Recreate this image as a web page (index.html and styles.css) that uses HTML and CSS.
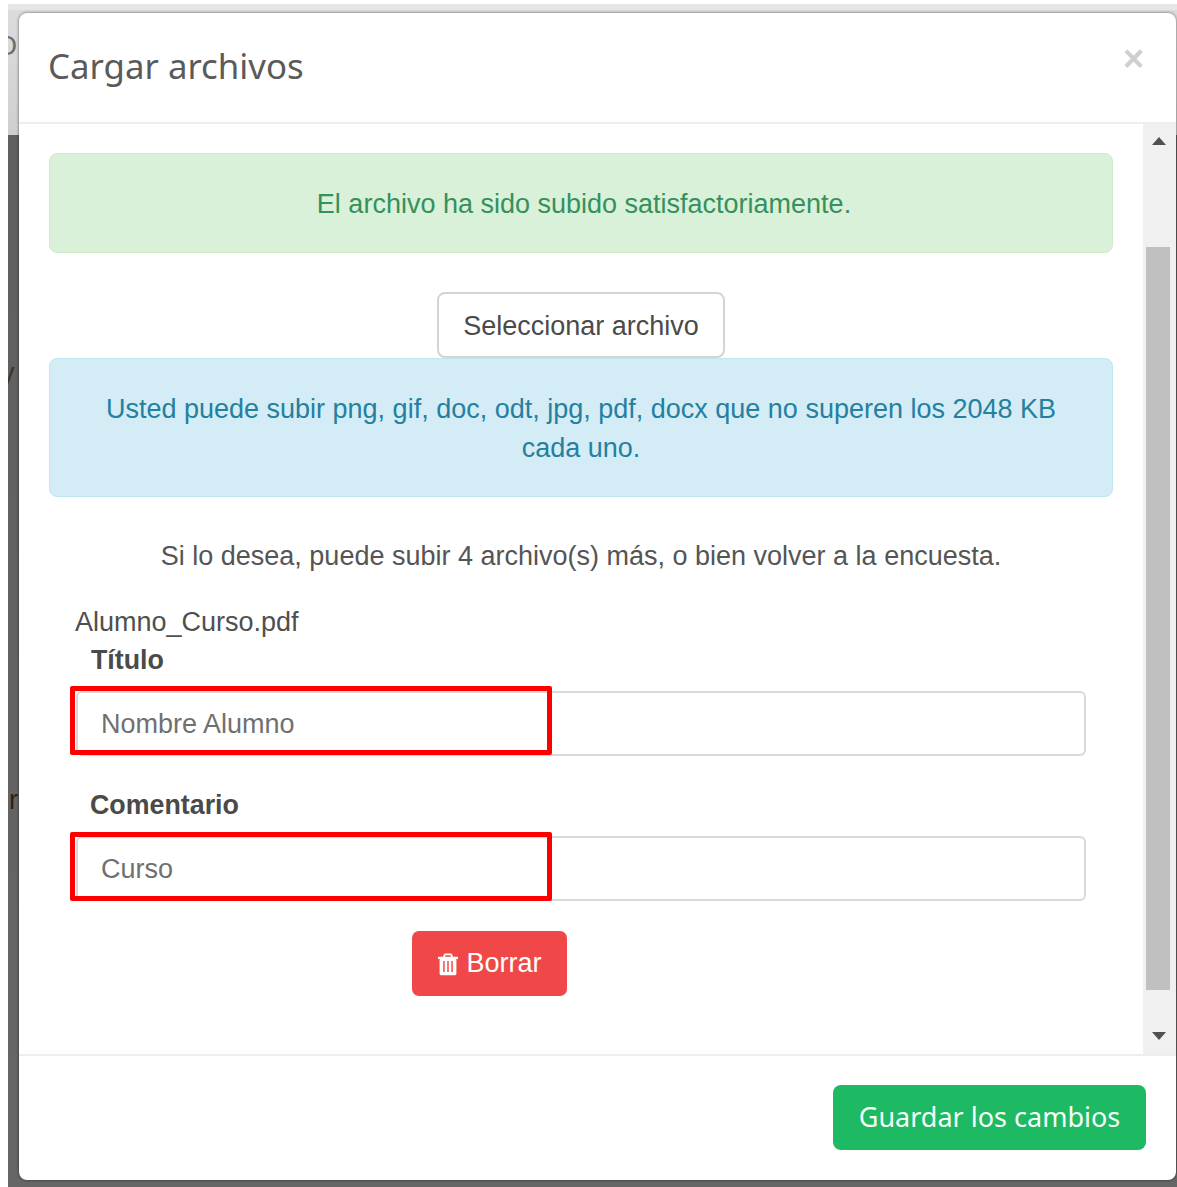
FILE: index.html
```html
<!DOCTYPE html>
<html lang="es">
<head>
<meta charset="utf-8">
<title>Cargar archivos</title>
<link rel="stylesheet" href="styles.css">
</head>
<body>
<div class="backdrop">
  <span class="behind behind-a">O,</span>
  <span class="behind behind-b">y</span>
  <span class="behind behind-c">.</span>
  <span class="behind behind-d">r</span>
  <div class="modal">
    <header class="modal-header">
      <h4 class="modal-title">Cargar archivos</h4>
      <span class="close">×</span>
    </header>
    <div class="modal-middle">
      <main class="modal-body">
        <div class="alert alert-success">El archivo ha sido subido satisfactoriamente.</div>
        <div class="picker"><button class="btn-file" type="button">Seleccionar archivo</button></div>
        <div class="alert alert-info">Usted puede subir png, gif, doc, odt, jpg, pdf, docx que no superen los 2048 KB cada uno.</div>
        <p class="hint">Si lo desea, puede subir 4 archivo(s) más, o bien volver a la encuesta.</p>
        <div class="file-name">Alumno_Curso.pdf</div>
        <div class="field field-title">
          <label class="field-label">Título</label>
          <div class="control">
            <input class="input" type="text" value="Nombre Alumno">
            <span class="mark"></span>
          </div>
        </div>
        <div class="field field-comment">
          <label class="field-label">Comentario</label>
          <div class="control">
            <input class="input" type="text" value="Curso">
            <span class="mark"></span>
          </div>
        </div>
        <div class="actions">
          <button class="btn-delete" type="button">
            <svg class="trash" viewBox="0 0 20 24" width="22" height="24" aria-hidden="true">
              <path fill="#fff" fill-rule="evenodd" d="M6.5 1.5h7l1.6 3.2H20v2.2h-1.600v14.600c0 1-.8 1.800-1.800 1.800H3.400c-1 0-1.800-.8-1.800-1.800V6.900H0V4.700h4.900zM7.500 3.300l-.7 1.400h6.400l-.7-1.400zM5.200 9v11h1.500V9zM9.250 9v11h1.500V9zM13.300 9v11h1.500V9z"/>
            </svg>
            <span>Borrar</span>
          </button>
        </div>
      </main>
      <div class="scrollbar">
        <svg class="arrow" viewBox="0 0 14 8" width="14" height="8"><path fill="#505050" d="M7 0l7 8H0z"/></svg>
        <div class="track"><div class="thumb"></div></div>
        <svg class="arrow" viewBox="0 0 14 8" width="14" height="8"><path fill="#505050" d="M0 0h14L7 8z"/></svg>
      </div>
    </div>
    <footer class="modal-footer">
      <button class="btn-save" type="button">Guardar los cambios</button>
    </footer>
  </div>
</div>
</body>
</html>
```

FILE: styles.css
```css
* {
  box-sizing: border-box;
}

html,
body {
  margin: 0;
  height: 100%;
  background: #fff;
}

body {
  padding: 4px 0 0 8px;
  overflow: hidden;
  font-family: "Liberation Sans", Arial, sans-serif;
  color: #4a4a4a;
}

/* Dimmed page behind the dialog: light navbar strip, then dark rows */
.backdrop {
  position: relative;
  height: 1183px;
  padding: 9px 1px 0 11px;
  overflow: hidden;
  background:
    linear-gradient(#e6e6e6, #e6e6e6 6px, #dcdcdc 6px, #cfcfcf 131px, #5f5f5f 131px, #666 100%);
}

.behind {
  position: absolute;
  font-size: 27px;
  line-height: 30px;
}

.behind-a { top: 27px; left: -12px; color: #6f6a66; }
.behind-b { top: 354px; left: -7px; color: #3f3226; }
.behind-c { top: 552px; left: -6px; color: #2a5a8a; }
.behind-d { top: 781px; left: 1px; color: #2e2218; }

.modal {
  position: relative;
  display: flex;
  flex-direction: column;
  height: 1167px;
  background: #fff;
  border-radius: 8px;
  overflow: hidden;
  box-shadow: 0 0 3px rgba(0, 0, 0, .6);
}

.modal-header {
  display: flex;
  justify-content: space-between;
  height: 111px;
  padding: 30px 30px 0 29px;
  border-bottom: 2px solid #eeeeee;
}

.modal-title {
  margin: 0;
  font-family: "Noto Sans", "Open Sans", sans-serif;
  font-size: 34.800px;
  font-weight: 400;
  line-height: 46px;
  color: #5a5a5a;
}

.close {
  margin: -9px 2px 0 0;
  font-size: 36px;
  font-weight: 700;
  line-height: 50px;
  color: #cfcfcf;
}

.modal-middle {
  display: flex;
  flex: 1;
  min-height: 0;
}

.modal-body {
  flex: 1;
  padding: 29px 30px 0 30px;
}

.alert {
  border: 1px solid;
  border-radius: 8px;
  text-align: center;
  font-size: 27px;
  line-height: 39px;
}

.alert-success {
  height: 100px;
  padding: 31px 0 0 6px;
  background: #d9f0d9;
  border-color: #d0ebc8;
  color: #36905c;
}

.alert-info {
  height: 139px;
  padding: 31px 30px 0;
  background: #d3ecf6;
  border-color: #bde8f1;
  color: #25809f;
}

.picker {
  display: flex;
  justify-content: center;
  padding-top: 39px;
  height: 105px;
}

.btn-file {
  width: 288px;
  height: 66px;
  padding: 2px 0 0;
  background: #fff;
  border: 2px solid #d4d4d4;
  border-radius: 8px;
  font: inherit;
  font-size: 27px;
  color: #4a4a4a;
}

.hint {
  margin: 40px 0 0;
  text-align: center;
  font-size: 27px;
  line-height: 39px;
  color: #555;
}

.file-name {
  margin: 27px 0 0 26px;
  font-size: 27px;
  line-height: 38px;
  color: #4f4f4f;
}

.field {
  margin: 0 27px 0 27px;
}

.field-label {
  display: block;
  font-size: 26.800px;
  font-weight: 700;
  line-height: 38px;
  margin-left: 15px;
}

.field-comment {
  margin-top: 30px;
}

.field-comment .field-label {
  margin-left: 14px;
}

.control {
  position: relative;
  margin-top: 12px;
}

.input {
  display: block;
  width: 100%;
  height: 65px;
  padding: 2px 23px 0;
  background: #fff;
  border: 2px solid #d8d8d8;
  border-radius: 6px;
  font: inherit;
  font-size: 27px;
  color: #707070;
}

/* Red annotation frames drawn over the inputs */
.mark {
  position: absolute;
  left: -6px;
  top: -5px;
  width: 482px;
  height: 69px;
  border: 5px solid #fe0000;
  border-radius: 2px;
  pointer-events: none;
}

.field-comment .mark {
  top: -4px;
}

.actions {
  margin: 30px 0 0 363px;
}

.btn-delete {
  display: inline-flex;
  align-items: center;
  justify-content: center;
  gap: 7px;
  width: 155px;
  height: 65px;
  padding: 0;
  background: #f04848;
  border: 0;
  border-radius: 7px;
  font: inherit;
  font-size: 27px;
  color: #fff;
}

.scrollbar {
  display: flex;
  flex-direction: column;
  align-items: center;
  width: 33px;
  padding-right: 2px;
  background: #f0f0f0;
}

.arrow {
  flex: none;
  margin: 13px 0 11px;
}

.arrow:last-child {
  margin: 10px 0 14px;
}

.track {
  flex: 1;
  width: 100%;
  padding: 91px 4px 32px 3px;
}

.thumb {
  height: 100%;
  background: #c0c0c0;
}

.modal-footer {
  display: flex;
  justify-content: flex-end;
  height: 126px;
  padding: 29px 30px 0 0;
  border-top: 2px solid #eeeeee;
}

.btn-save {
  width: 313px;
  height: 65px;
  padding: 0 0 2px;
  background: #1eb963;
  border: 0;
  border-radius: 8px;
  font-family: "Noto Sans", "Open Sans", sans-serif;
  font-size: 27px;
  color: #f4fff8;
}
```
